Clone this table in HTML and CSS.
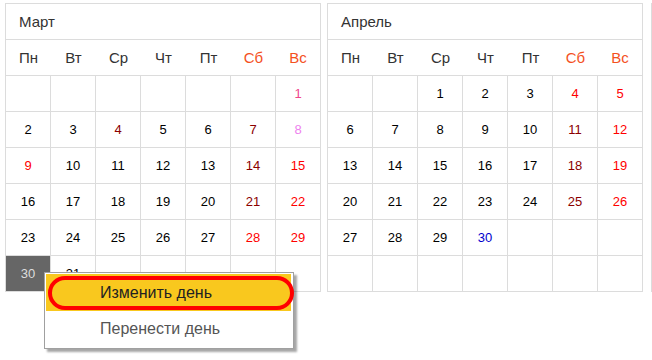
FILE: index.html
```html
<!DOCTYPE html>
<html lang="ru">
<head>
<meta charset="utf-8">
<link rel="stylesheet" href="styles.css">
</head>
<body>
<div class="page">
  <div class="month">
    <div class="title">Март</div>
    <div class="dn">Пн</div><div class="dn">Вт</div><div class="dn">Ср</div><div class="dn">Чт</div><div class="dn">Пт</div><div class="dn we">Сб</div><div class="dn we last">Вс</div>
    <div class="c"></div><div class="c"></div><div class="c"></div><div class="c"></div><div class="c"></div><div class="c"></div><div class="c pink">1</div>
    <div class="c">2</div><div class="c">3</div><div class="c maroon">4</div><div class="c">5</div><div class="c">6</div><div class="c maroon">7</div><div class="c violet">8</div>
    <div class="c red">9</div><div class="c">10</div><div class="c">11</div><div class="c">12</div><div class="c">13</div><div class="c maroon">14</div><div class="c red">15</div>
    <div class="c">16</div><div class="c">17</div><div class="c">18</div><div class="c">19</div><div class="c">20</div><div class="c maroon">21</div><div class="c red">22</div>
    <div class="c">23</div><div class="c">24</div><div class="c">25</div><div class="c">26</div><div class="c">27</div><div class="c red">28</div><div class="c red">29</div>
    <div class="c sel"><span>30</span></div><div class="c">31</div><div class="c"></div><div class="c"></div><div class="c"></div><div class="c"></div><div class="c"></div>
  </div>
  <div class="month">
    <div class="title">Апрель</div>
    <div class="dn">Пн</div><div class="dn">Вт</div><div class="dn">Ср</div><div class="dn">Чт</div><div class="dn">Пт</div><div class="dn we">Сб</div><div class="dn we last">Вс</div>
    <div class="c"></div><div class="c"></div><div class="c">1</div><div class="c">2</div><div class="c">3</div><div class="c red">4</div><div class="c red">5</div>
    <div class="c">6</div><div class="c">7</div><div class="c">8</div><div class="c">9</div><div class="c">10</div><div class="c maroon">11</div><div class="c red">12</div>
    <div class="c">13</div><div class="c">14</div><div class="c">15</div><div class="c">16</div><div class="c">17</div><div class="c maroon">18</div><div class="c red">19</div>
    <div class="c">20</div><div class="c">21</div><div class="c">22</div><div class="c">23</div><div class="c">24</div><div class="c maroon">25</div><div class="c red">26</div>
    <div class="c">27</div><div class="c">28</div><div class="c">29</div><div class="c blue">30</div><div class="c"></div><div class="c"></div><div class="c"></div>
    <div class="c"></div><div class="c"></div><div class="c"></div><div class="c"></div><div class="c"></div><div class="c"></div><div class="c"></div>
  </div>
  <div class="stub"></div>

  <div class="menu">
    <div class="item active">Изменить день<span class="ring"></span></div>
    <div class="item">Перенести день</div>
  </div>
</div>
</body>
</html>
```

FILE: styles.css
```css
html, body {
  margin: 0;
  padding: 0;
  background: #fff;
  overflow: hidden;
}

body {
  width: 652px;
  height: 360px;
  font-family: "Liberation Sans", Arial, sans-serif;
}

.page {
  position: relative;
  display: flex;
  gap: 6px;
  padding: 3px 0 0 5px;
  width: 652px;
  height: 360px;
  box-sizing: border-box;
}

.month {
  display: grid;
  grid-template-columns: repeat(7, 45px);
  grid-auto-rows: 36px;
  border-top: 1px solid #dcdcdc;
  border-left: 1px solid #dcdcdc;
  align-self: flex-start;
  flex: none;
}

.stub {
  flex: none;
  width: 0;
  height: 288px;
  margin-left: 2px;
  border-left: 1px solid #dcdcdc;
  border-top: 1px solid #dcdcdc;
}

.title {
  grid-column: 1 / -1;
  box-sizing: border-box;
  border-right: 1px solid #dcdcdc;
  border-bottom: 1px solid #dcdcdc;
  padding-left: 13px;
  display: flex;
  align-items: center;
  font-size: 15px;
  color: #333;
}

.dn {
  box-sizing: border-box;
  border-bottom: 1px solid #dcdcdc;
  display: flex;
  align-items: center;
  justify-content: center;
  font-size: 15px;
  color: #333;
}

.dn.last {
  border-right: 1px solid #dcdcdc;
}

.dn.we {
  color: #f4511e;
}

.c {
  box-sizing: border-box;
  border-right: 1px solid #dcdcdc;
  border-bottom: 1px solid #dcdcdc;
  display: flex;
  align-items: center;
  justify-content: center;
  font-size: 13px;
  color: #000;
}

.c.red { color: #f00; }
.c.maroon { color: #8b0000; }
.c.pink { color: #f0468a; }
.c.violet { color: #ee82ee; }
.c.blue { color: #0000cd; }

.c.sel {
  background: #666;
  color: #ddd;
}

.menu {
  position: absolute;
  left: 44px;
  top: 272px;
  width: 250px;
  height: 77px;
  box-sizing: border-box;
  border: 1px solid #a0a0a0;
  padding: 1px;
  background: #fff;
  box-shadow: 3px 3px 2px rgba(0, 0, 0, 0.35);
  display: flex;
  flex-direction: column;
}

.item {
  position: relative;
  height: 36px;
  display: flex;
  align-items: center;
  padding-left: 54px;
  font-size: 16px;
  color: #555;
}

.item.active {
  height: 37px;
  margin-right: 1px;
  background: #f9c81e;
  color: #222;
}

.ring {
  position: absolute;
  left: 2px;
  top: 2px;
  width: 246px;
  height: 34px;
  box-sizing: border-box;
  border: 4px solid #f00;
  border-radius: 17px;
}
```
